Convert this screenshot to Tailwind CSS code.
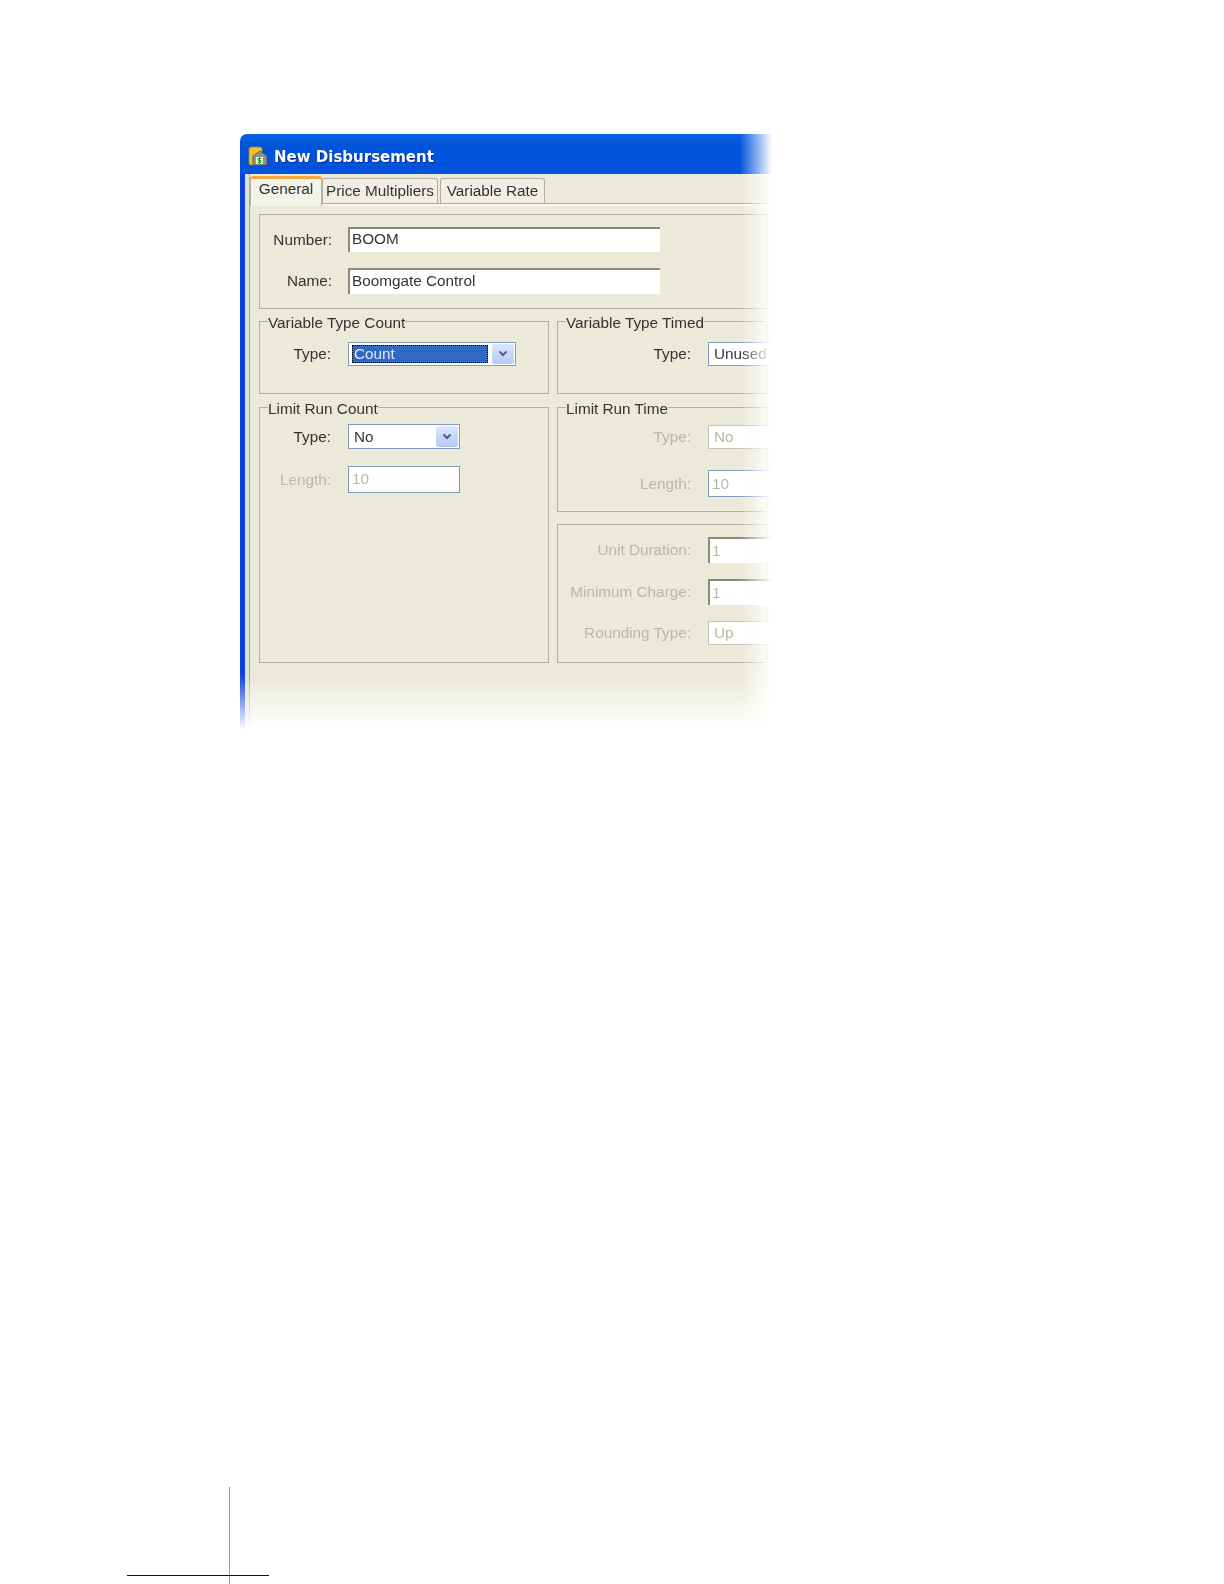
<!DOCTYPE html>
<html lang="en">
<head>
  <meta charset="UTF-8" />
  <title>New Disbursement</title>
  <script src="https://cdn.jsdelivr.net/npm/@tailwindcss/browser@4"></script>
</head>
<body class="bg-white h-[1584px] relative overflow-hidden font-['Liberation_Sans',sans-serif] text-[15.3px] leading-[18px] text-[#333]">

  <!-- Window screenshot -->
  <div class="relative ml-[240px] top-[134px] w-[532px] h-[596px] overflow-hidden rounded-tl-[7px] flex flex-col bg-[#ebe9d8]">
    <div class="blur-[0.5px] flex flex-col h-full">
      <!-- Title bar -->
      <div class="h-[40px] shrink-0 flex items-center gap-[6px] pl-[8px] pt-[6px] bg-gradient-to-b from-[#0a62e6] via-[#0054dc] via-30% to-[#0353dc]">
        <svg width="20" height="20" viewBox="0 0 20 20" class="-mt-[3px]">
          <rect x="1" y="1" width="13" height="18" rx="2" fill="#f2c12e" stroke="#a8801c" stroke-width="0.8" />
          <path d="M5 10 L12 5 L19 10 V19 H5 Z" fill="#8c9490" stroke="#4c524e" stroke-width="0.8" />
          <rect x="8" y="11" width="7" height="7" fill="#e8f4e0" />
          <path d="M13.5 12.5 H10 V14.5 H13 V16.5 H9.5 M11.5 11 V18" fill="none" stroke="#2d9a32" stroke-width="1" />
        </svg>
        <span class="font-['DejaVu_Sans',sans-serif] font-bold text-[15px] text-white [text-shadow:1px_1px_1px_#0a2f96]">New Disbursement</span>
      </div>

      <div class="flex-1 flex">
        <!-- Frame left edge -->
        <div class="w-[5px] bg-[#0a3fe0]"></div>
        <div class="w-[5px] bg-[#dfe3d8] border-r border-[#aaa99a]"></div>

        <div class="flex-1 flex flex-col">
          <!-- Tabs -->
          <div class="h-[30px] flex items-end gap-[2px] border-b border-[#a9a89a] relative">
            <div class="w-[72px] h-[30px] -mb-[3px] relative z-10 bg-[#f4f3ea] border-t-[3px] border-[#f5a63c] border-x border-x-[#b5b4a6] rounded-t-[3px] flex items-center justify-center pb-[7px]">General</div>
            <div class="w-[116px] h-[25px] -ml-[2px] bg-[#f1efe4] border border-b-0 border-[#b0af9f] rounded-t-[3px] flex items-center justify-center">Price Multipliers</div>
            <div class="w-[105px] h-[25px] bg-[#f1efe4] border border-b-0 border-[#b0af9f] rounded-t-[3px] flex items-center justify-center">Variable Rate</div>
          </div>

          <!-- Tab page -->
          <div class="flex-1 border-t-2 border-[#f7f6ef] pt-[8px] pl-[9px] flex flex-col gap-[5px]">
            <!-- Number / name -->
            <div class="w-[509px] h-[95px] border border-[#b0ae9e] pt-[12px] flex flex-col gap-[16px]">
              <div class="flex items-center">
                <span class="w-[72px] text-right">Number:</span>
                <div class="ml-[16px] w-[312px] h-[25px] bg-white border-t-[2px] border-l-[2px] border-[#8b8978] flex items-center pl-[2px] pb-[3px]">BOOM</div>
              </div>
              <div class="flex items-center">
                <span class="w-[72px] text-right">Name:</span>
                <div class="ml-[16px] w-[312px] h-[26px] bg-white border-t-[2px] border-l-[2px] border-[#8b8978] flex items-center pl-[2px] pb-[3px]">Boomgate Control</div>
              </div>
            </div>

            <div class="flex gap-[8px]">
              <!-- Left column -->
              <div class="w-[290px] flex flex-col gap-[6px]">
                <fieldset class="h-[80px] border border-[#b0ae9e] pt-[14px]">
                  <legend class="ml-[8px] leading-[14px] relative top-[2px]">Variable Type Count</legend>
                  <div class="flex items-center">
                    <span class="w-[71px] text-right">Type:</span>
                    <div class="ml-[17px] w-[168px] h-[24px] bg-white border border-[#7f9db9] flex items-center pl-[3px] pr-[1px] gap-[4px]">
                      <span class="w-[137px] h-[18px] bg-[#316ac5] text-[#dfe8fa] border border-dotted border-black flex items-center pl-[1px]">Count</span>
                      <div class="w-[22px] h-[20px] rounded-[2px] bg-gradient-to-b from-[#dce7fd] to-[#b4c8f5] flex items-center justify-center">
                        <svg width="10" height="8" viewBox="0 0 10 8"><path d="M1.5 1.5 L5 5 L8.5 1.5" fill="none" stroke="#4d6185" stroke-width="2" /></svg>
                      </div>
                    </div>
                  </div>
                </fieldset>
                <fieldset class="h-[263px] border border-[#b0ae9e] pt-[10px]">
                  <legend class="ml-[8px] leading-[14px] relative top-[2px]">Limit Run Count</legend>
                  <div class="flex flex-col gap-[17px]">
                    <div class="flex items-center">
                      <span class="w-[71px] text-right">Type:</span>
                      <div class="ml-[17px] w-[112px] h-[25px] bg-white border border-[#7f9db9] flex items-center justify-between pl-[5px] pr-[1px]">
                        <span>No</span>
                        <div class="w-[22px] h-[21px] rounded-[2px] bg-gradient-to-b from-[#dce7fd] to-[#b4c8f5] flex items-center justify-center">
                          <svg width="10" height="8" viewBox="0 0 10 8"><path d="M1.5 1.5 L5 5 L8.5 1.5" fill="none" stroke="#4d6185" stroke-width="2" /></svg>
                        </div>
                      </div>
                    </div>
                    <div class="flex items-center text-[#b9b7a7]">
                      <span class="w-[71px] text-right">Length:</span>
                      <div class="ml-[17px] w-[112px] h-[27px] bg-white border border-[#7f9db9] flex items-center pl-[3px] pb-[2px]">10</div>
                    </div>
                  </div>
                </fieldset>
              </div>

              <!-- Right column -->
              <div class="w-[211px] flex flex-col">
                <fieldset class="w-[211px] min-w-0 h-[80px] border border-[#b0ae9e] pt-[14px]">
                  <legend class="ml-[8px] leading-[14px] relative top-[2px]">Variable Type Timed</legend>
                  <div class="flex items-center">
                    <span class="w-[133px] shrink-0 text-right">Type:</span>
                    <div class="ml-[17px] w-[72px] shrink-0 h-[24px] bg-white border border-r-0 border-[#7f9db9] flex items-center pl-[5px]">Unused</div>
                  </div>
                </fieldset>
                <fieldset class="w-[211px] min-w-0 mt-[6px] h-[112px] border border-[#b0ae9e] pt-[11px]">
                  <legend class="ml-[8px] leading-[14px] relative top-[2px]">Limit Run Time</legend>
                  <div class="flex flex-col gap-[21px] text-[#b9b7a7]">
                    <div class="flex items-center">
                      <span class="w-[133px] shrink-0 text-right">Type:</span>
                      <div class="ml-[17px] w-[72px] shrink-0 h-[24px] bg-white border border-r-0 border-[#c4c3b5] flex items-center pl-[5px]">No</div>
                    </div>
                    <div class="flex items-center">
                      <span class="w-[133px] shrink-0 text-right">Length:</span>
                      <div class="ml-[17px] w-[72px] shrink-0 h-[27px] bg-white border border-r-0 border-[#7f9db9] flex items-center pl-[3px]">10</div>
                    </div>
                  </div>
                </fieldset>
                <div class="mt-[12px] h-[139px] border border-[#b0ae9e] pt-[12px] flex flex-col gap-[16px] text-[#b9b7a7]">
                  <div class="flex items-center">
                    <span class="w-[133px] shrink-0 text-right">Unit Duration:</span>
                    <div class="ml-[17px] w-[72px] shrink-0 h-[26px] bg-white border-t-[2px] border-l-[2px] border-[#8b8978] flex items-center pl-[2px]">1</div>
                  </div>
                  <div class="flex items-center">
                    <span class="w-[133px] shrink-0 text-right">Minimum Charge:</span>
                    <div class="ml-[17px] w-[72px] shrink-0 h-[26px] bg-white border-t-[2px] border-l-[2px] border-[#8b8978] flex items-center pl-[2px]">1</div>
                  </div>
                  <div class="flex items-center">
                    <span class="w-[133px] shrink-0 text-right">Rounding Type:</span>
                    <div class="ml-[17px] w-[72px] shrink-0 h-[24px] bg-white border border-r-0 border-[#c4c3b5] flex items-center pl-[5px]">Up</div>
                  </div>
                </div>
              </div>
            </div>
          </div>
        </div>
      </div>
    </div>

    <!-- Soft fade on the cropped edges -->
    <div class="absolute top-0 bottom-0 right-0 w-[32px] bg-gradient-to-r from-white/0 to-white"></div>
    <div class="absolute left-0 right-0 bottom-0 h-[56px] bg-gradient-to-b from-white/0 to-white"></div>
  </div>

  <!-- Page crop marks -->
  <div class="absolute left-[229px] top-[1487px] bottom-0 w-px bg-[#cf9530]"></div>
  <div class="absolute left-[127px] top-[1575px] w-[142px] h-px bg-[#00009a]"></div>
</body>
</html>
